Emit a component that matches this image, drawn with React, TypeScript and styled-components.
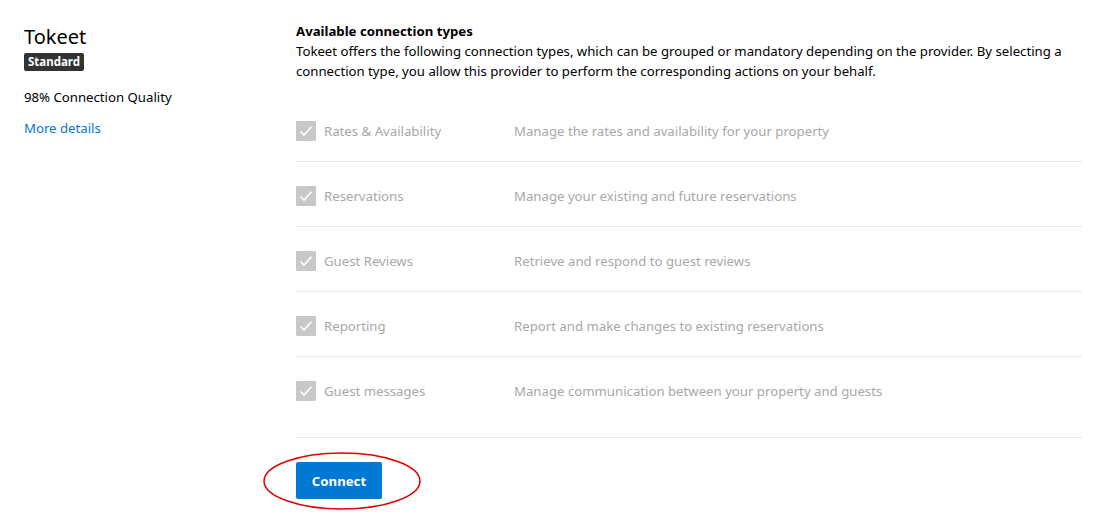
import React from "react";
import styled, { createGlobalStyle } from "styled-components";

const GlobalStyle = createGlobalStyle`
  html, body { margin: 0; padding: 0; background: #fff; }
  body {
    font-family: "Noto Sans", "Open Sans", Arial, sans-serif;
    color: #000;
    -webkit-font-smoothing: antialiased;
  }
`;

const Page = styled.div`
  display: grid;
  grid-template-columns: 272px 786px;
  padding: 21px 0 0 24px;
  width: 1101px;
  height: 528px;
  box-sizing: border-box;
`;

const Sidebar = styled.aside`
  display: flex;
  flex-direction: column;
  align-items: flex-start;
`;

const ProviderName = styled.h1`
  margin: 3px 0 0;
  font-size: 20px;
  font-weight: 400;
  line-height: 26px;
`;

const Badge = styled.span`
  display: inline-block;
  margin-top: 3px;
  padding: 0 4px;
  background: #333;
  color: #fff;
  font-size: 11.5px;
  font-weight: 700;
  line-height: 18px;
  border-radius: 2px;
`;

const Quality = styled.div`
  margin-top: 16px;
  font-size: 13.2px;
  line-height: 20px;
`;

const DetailsLink = styled.a`
  margin-top: 11px;
  font-size: 13.2px;
  line-height: 20px;
  color: #0078d4;
  text-decoration: none;
`;

const Main = styled.section`
  display: flex;
  flex-direction: column;
`;

const Heading = styled.h2`
  margin: 0;
  font-size: 13.2px;
  font-weight: 700;
  line-height: 20px;
`;

const Intro = styled.p`
  margin: 0;
  font-size: 13.2px;
  line-height: 20px;
`;

const TypeList = styled.ul`
  list-style: none;
  margin: 16px 0 0;
  padding: 0 0 16px;
  border-bottom: 1px solid #e6e6e6;
`;

const TypeRow = styled.li`
  display: grid;
  grid-template-columns: 218px 1fr;
  align-items: center;
  padding: 24px 0 20px;
  border-bottom: 1px solid #e6e6e6;
  &:last-child { border-bottom: none; }
`;

const TypeLabel = styled.label`
  display: flex;
  align-items: center;
  gap: 8px;
  height: 20px;
  font-size: 13.2px;
  color: #a8a8a8;
`;

const Box = styled.span`
  display: inline-flex;
  align-items: center;
  justify-content: center;
  width: 20px;
  height: 20px;
  background: #c8c8c8;
  border-radius: 1px;
`;

const TypeDesc = styled.span`
  font-size: 13.2px;
  color: #a8a8a8;
`;

const Actions = styled.div`
  position: relative;
  margin-top: 24px;
  align-self: flex-start;
`;

const ConnectButton = styled.button`
  display: block;
  width: 86px;
  height: 37px;
  border: none;
  border-radius: 2px;
  background: #0078d4;
  color: #fff;
  font-family: inherit;
  font-size: 13.2px;
  font-weight: 700;
  cursor: pointer;
`;

const Highlight = styled.svg`
  position: absolute;
  left: -34px;
  top: -10px;
  pointer-events: none;
`;

const types = [
  ["Rates & Availability", "Manage the rates and availability for your property"],
  ["Reservations", "Manage your existing and future reservations"],
  ["Guest Reviews", "Retrieve and respond to guest reviews"],
  ["Reporting", "Report and make changes to existing reservations"],
  ["Guest messages", "Manage communication between your property and guests"],
];

const Check = () => (
  <svg width="14" height="12" viewBox="0 0 14 12">
    <path d="M1.5 6.5 L5 10 L12.5 1.8" fill="none" stroke="#fff" strokeWidth="1.6" />
  </svg>
);

export default function App() {
  return (
    <>
      <GlobalStyle />
      <Page>
        <Sidebar>
          <ProviderName>Tokeet</ProviderName>
          <Badge>Standard</Badge>
          <Quality>98% Connection Quality</Quality>
          <DetailsLink href="#">More details</DetailsLink>
        </Sidebar>
        <Main>
          <Heading>Available connection types</Heading>
          <Intro>
            Tokeet offers the following connection types, which can be grouped or mandatory depending on the provider. By selecting a
            connection type, you allow this provider to perform the corresponding actions on your behalf.
          </Intro>
          <TypeList>
            {types.map(([label, desc]) => (
              <TypeRow key={label}>
                <TypeLabel>
                  <Box><Check /></Box>
                  {label}
                </TypeLabel>
                <TypeDesc>{desc}</TypeDesc>
              </TypeRow>
            ))}
          </TypeList>
          <Actions>
            <ConnectButton>Connect</ConnectButton>
            <Highlight width="162" height="62" viewBox="0 0 162 62">
              <ellipse cx="80" cy="29" rx="78" ry="28" fill="none" stroke="#e00000" strokeWidth="1.5" />
            </Highlight>
          </Actions>
        </Main>
      </Page>
    </>
  );
}
